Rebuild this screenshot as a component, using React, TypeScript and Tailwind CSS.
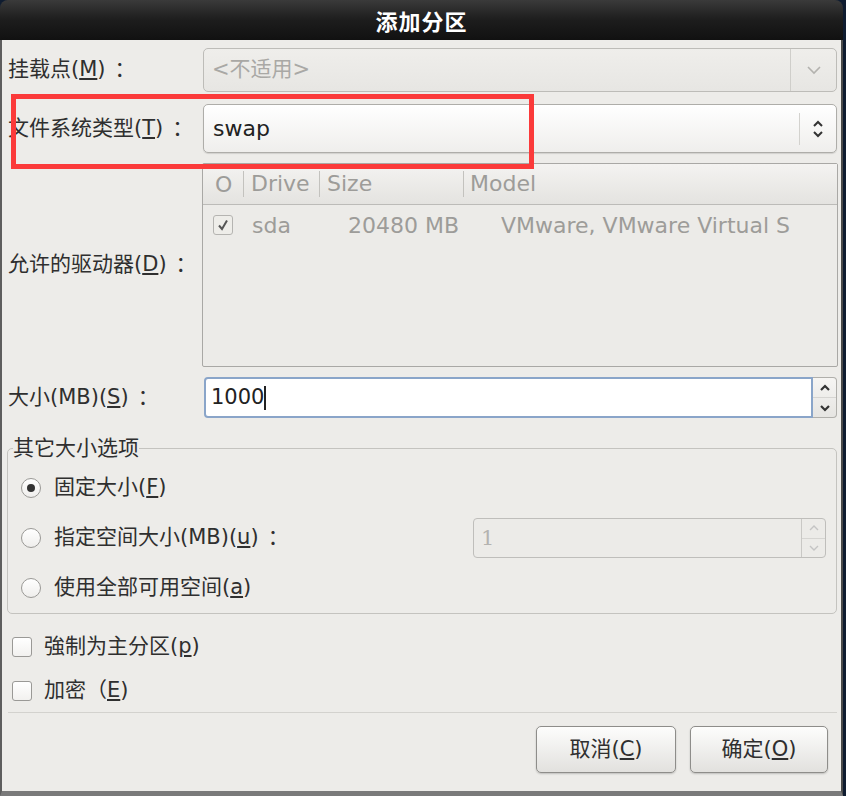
import React from 'react';

const FONT = "font-['DejaVu_Sans','Noto_Sans_CJK_SC',sans-serif]";

const ChevronDown = ({ className }: { className?: string }) => (
  <svg width="16" height="10" viewBox="0 0 16 10" className={className}>
    <path d="M2 2 L8 8 L14 2" fill="none" stroke="currentColor" strokeWidth="1.6" />
  </svg>
);

const UpDown = () => (
  <svg width="12" height="20" viewBox="0 0 12 20" className="text-[#333]">
    <path d="M2 7 L6 3 L10 7" fill="none" stroke="currentColor" strokeWidth="2" />
    <path d="M2 13 L6 17 L10 13" fill="none" stroke="currentColor" strokeWidth="2" />
  </svg>
);

const SpinArrows = ({ disabled }: { disabled?: boolean }) => (
  <div className={`flex flex-col h-full w-[23px] ${disabled ? 'text-[#c4c4c4]' : 'text-[#333]'}`}>
    <div className="flex-1 flex items-center justify-center border-b border-[#d6d5d2]">
      <svg width="12" height="8" viewBox="0 0 12 8">
        <path d="M2 6 L6 2 L10 6" fill="none" stroke="currentColor" strokeWidth={disabled ? 1.4 : 2.2} />
      </svg>
    </div>
    <div className="flex-1 flex items-center justify-center">
      <svg width="12" height="8" viewBox="0 0 12 8">
        <path d="M2 2 L6 6 L10 2" fill="none" stroke="currentColor" strokeWidth={disabled ? 1.4 : 2.2} />
      </svg>
    </div>
  </div>
);

const Check = ({ checked, disabled }: { checked?: boolean; disabled?: boolean }) => (
  <span
    className={`w-[20px] h-[20px] shrink-0 rounded-[3px] border flex items-center justify-center ${
      disabled ? 'border-[#b5b4b1] bg-[#eeede9]' : 'border-[#9a9996] bg-gradient-to-b from-white to-[#f2f1ef]'
    }`}
  >
    {checked && (
      <svg width="14" height="14" viewBox="0 0 14 14">
        <path d="M3 7.5 L6 11 L11 2.5" fill="none" stroke="#555" strokeWidth="2" />
      </svg>
    )}
  </span>
);

const Radio = ({ checked }: { checked?: boolean }) => (
  <span className="w-[20px] h-[20px] shrink-0 rounded-full border border-[#9a9996] bg-gradient-to-b from-white to-[#efeeec] flex items-center justify-center">
    {checked && <span className="w-[8px] h-[8px] rounded-full bg-[#333]" />}
  </span>
);

const U = ({ children }: { children: React.ReactNode }) => <span className="underline underline-offset-2">{children}</span>;

// GTK puts the colon with some air after the mnemonic
const Colon = () => <span className="pl-[9px]">：</span>;

export default function App() {
  return (
    <div className={`w-[846px] h-[796px] bg-[#0f1c30] overflow-hidden ${FONT}`}>
      <div className="w-[843px] h-[796px] flex flex-col">
        {/* Title bar */}
        <div className="h-[40px] shrink-0 rounded-t-[8px] bg-gradient-to-b from-[#3a3a3a] via-[#1d1d1d] to-[#111] flex items-center justify-center">
          <span className="text-white text-[22px] font-bold font-['Noto_Sans_CJK_SC',sans-serif] tracking-[1px]">添加分区</span>
        </div>

        {/* Body */}
        <div className="relative flex-1 flex flex-col bg-[#edece9] border-l-2 border-r-2 border-b-[5px] border-l-[#5e5e5e] border-r-[#4a4a4a] border-b-[#7a7a7a] pl-[6px] text-[21px] text-[#2f2f2f]">
          {/* Mount point */}
          <div className="flex items-center mt-[8px] h-[44px]">
            <div className="w-[195px] shrink-0 whitespace-nowrap">挂载点(<U>M</U>)<Colon /></div>
            <div className="w-[634px] h-full rounded-[5px] border border-[#bdbcb8] bg-gradient-to-b from-[#efeeeb] to-[#e7e6e3] flex items-center">
              <span className="flex-1 pl-[8px] text-[#a9a8a5]">&lt;不适用&gt;</span>
              <div className="w-[46px] h-full border-l border-[#cfceca] flex items-center justify-center text-[#b3b2ae]">
                <ChevronDown />
              </div>
            </div>
          </div>

          {/* File system type */}
          <div className="flex items-center mt-[12px] h-[49px]">
            <div className="w-[195px] shrink-0 whitespace-nowrap">文件系统类型(<U>T</U>)<Colon /></div>
            <div className="w-[634px] h-full rounded-[5px] border border-[#aeada9] bg-gradient-to-b from-white to-[#efeeec] shadow-[0_1px_1px_rgba(0,0,0,0.12)] flex items-center">
              <span className="flex-1 pl-[9px] text-[22px] text-[#222]">swap</span>
              <div className="w-[37px] h-[32px] border-l border-[#d3d2ce] flex items-center justify-center">
                <UpDown />
              </div>
            </div>
          </div>

          {/* Drives */}
          <div className="flex items-center mt-[10px] h-[204px]">
            <div className="w-[194px] shrink-0 whitespace-nowrap">允许的驱动器(<U>D</U>)<Colon /></div>
            <div className="w-[636px] h-full border border-[#a9a8a5] rounded-[2px] bg-[#ecebe8] flex flex-col text-[22px] text-[#9d9c99]">
              <div className="h-[41px] flex items-center border-b border-[#bcbbb8] bg-gradient-to-b from-[#f4f3f1] to-[#e4e3e0]">
                <span className="w-[40px] pl-[12px]">O</span>
                <span className="w-[76px] h-[26px] border-l border-[#c3c2be] pl-[7px] leading-[26px]">Drive</span>
                <span className="w-[144px] h-[26px] border-l border-[#c3c2be] pl-[7px] leading-[26px]">Size</span>
                <span className="flex-1 h-[26px] border-l border-[#c3c2be] pl-[6px] leading-[26px]">Model</span>
              </div>
              <div className="h-[40px] flex items-center whitespace-nowrap">
                <span className="w-[49px] pl-[10px] flex"><Check checked disabled /></span>
                <span className="w-[96px]">sda</span>
                <span className="w-[153px]">20480 MB</span>
                <span className="w-[300px] overflow-hidden">VMware, VMware Virtual S</span>
              </div>
            </div>
          </div>

          {/* Size */}
          <div className="flex items-center mt-[10px] h-[41px]">
            <div className="w-[196px] shrink-0 whitespace-nowrap">大小(MB)(<U>S</U>)<Colon /></div>
            <div className="w-[633px] h-full flex">
              <div className="flex-1 h-full rounded-l-[4px] border-2 border-[#8aa5c9] bg-white flex items-center pl-[5px] text-[21px] text-[#222]">
                1000<span className="w-[2px] h-[24px] bg-[#222]" />
              </div>
              <div className="h-full border border-l-0 border-[#b0afab] rounded-r-[4px] bg-gradient-to-b from-[#f6f5f3] to-[#e6e5e2]">
                <SpinArrows />
              </div>
            </div>
          </div>

          {/* Other size options */}
          <fieldset className="mt-[18px] -ml-[1px] w-[830px] border border-[#c4c3bf] rounded-[5px] pt-[3px]">
            <legend className="ml-[5px] leading-[24px] h-[24px]">其它大小选项</legend>
            <div className="flex items-center h-[50px] pl-[13px] gap-[13px]">
              <Radio checked />
              <span>固定大小(<U>F</U>)</span>
            </div>
            <div className="flex items-center h-[50px] pl-[13px] gap-[13px]">
              <Radio />
              <span className="whitespace-nowrap">指定空间大小(MB)(<U>u</U>)<Colon /></span>
              <div className="ml-auto mr-[10px] w-[353px] h-[40px] flex rounded-[4px] border border-[#bfbebb] bg-[#ecebe8]">
                <span className="flex-1 pl-[7px] leading-[38px] text-[#b4b3b0] font-['DejaVu_Serif',serif]">1</span>
                <div className="border-l border-[#c9c8c5]">
                  <SpinArrows disabled />
                </div>
              </div>
            </div>
            <div className="flex items-center h-[50px] pl-[13px] gap-[13px]">
              <Radio />
              <span>使用全部可用空间(<U>a</U>)</span>
            </div>
          </fieldset>

          {/* Checkboxes */}
          <div className="flex items-center mt-[10px] h-[46px] pl-[4px] gap-[12px]">
            <Check />
            <span>強制为主分区(<U>p</U>)</span>
          </div>
          <div className="flex items-center h-[42px] pl-[4px] gap-[12px]">
            <Check />
            <span>加密（<U>E</U>)</span>
          </div>

          <div className="h-[1px] bg-[#d3d2ce] mr-[4px]" />

          {/* Buttons */}
          <div className="flex justify-end gap-[14px] mt-[13px] pr-[13px]">
            <button className="w-[140px] h-[47px] rounded-[5px] border border-[#8e8d8a] bg-gradient-to-b from-[#fdfdfc] to-[#e2e1de] shadow-[0_1px_2px_rgba(0,0,0,0.2)] text-[#2f2f2f]">
              取消(<U>C</U>)
            </button>
            <button className="w-[138px] h-[47px] rounded-[5px] border border-[#8e8d8a] bg-gradient-to-b from-[#fdfdfc] to-[#e2e1de] shadow-[0_1px_2px_rgba(0,0,0,0.2)] text-[#2f2f2f]">
              确定(<U>O</U>)
            </button>
          </div>

          {/* Highlight annotation */}
          <div className="absolute left-[9px] top-[54px] w-[523px] h-[75px] border-[5px] border-[#fb3a3a] pointer-events-none" />
        </div>
      </div>
    </div>
  );
}
